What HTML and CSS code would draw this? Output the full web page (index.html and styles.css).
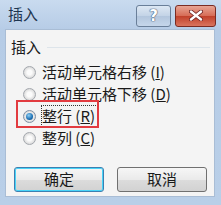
FILE: index.html
```html
<!DOCTYPE html>
<html lang="zh-CN">
<head>
  <meta charset="UTF-8">
  <meta name="viewport" content="width=device-width, initial-scale=1.0">
  <title>插入</title>
  <link rel="stylesheet" href="styles.css">
</head>
<body>
  <div class="dialog">
    <div class="titlebar">
      <span class="title">插入</span>
      <span class="tbtn help">?</span>
      <span class="tbtn close">
        <svg width="14" height="11" viewBox="0 0 14 11"><path d="M2 1.5 L12 9.5 M12 1.5 L2 9.5" stroke="#6b2020" stroke-width="4" stroke-linecap="round"/><path d="M2 1.5 L12 9.5 M12 1.5 L2 9.5" stroke="#fff" stroke-width="2.4" stroke-linecap="round"/></svg>
      </span>
    </div>
    <div class="client">
      <div class="group-label"><span>插入</span></div>
      <ul class="options">
        <li><span class="radio"></span><span class="txt">活动单元格右移 (<u>I</u>)</span></li>
        <li><span class="radio"></span><span class="txt">活动单元格下移 (<u>D</u>)</span></li>
        <li class="mark"><span class="radio on"></span><span class="txt focus">整行 (<u>R</u>)</span></li>
        <li><span class="radio"></span><span class="txt">整列 (<u>C</u>)</span></li>
      </ul>
      <div class="buttons">
        <span class="btn default">确定</span>
        <span class="btn">取消</span>
      </div>
    </div>
  </div>
</body>
</html>
```

FILE: styles.css
```css
* {margin:0; padding:0;}
body{
  font-family: "Noto Sans CJK SC", "DejaVu Sans", sans-serif;
  font-size: 15px;
  color: #1a1a1a;
}
.dialog{
  width: 221px;
  height: 205px;
  background: linear-gradient(#c9dbef, #b6cce6 30px, #b9cfe8);
  display: flex;
  flex-direction: column;
}
.titlebar{
  height: 29px;
  display: flex;
  align-items: center;
  padding-left: 8px;
}
.title{
  color: #1e3550;
  line-height: 20px;
  margin-top: -2px;
  flex: 1;
}
.tbtn{
  height: 20px;
  margin-top: 2px;
  border: 1px solid #6a7f99;
  border-radius: 3px;
  display: flex;
  align-items: center;
  justify-content: center;
}
.help{
  width: 33px;
  background: linear-gradient(#dde8f4, #c3d3e6 50%, #b3c6dd 51%, #c5d6ea);
  color: #fff;
  font-family: "DejaVu Sans", sans-serif;
  font-weight: bold;
  font-size: 15px;
  text-shadow: 0 0 1px #425a78, 0 0 1px #425a78, 0 0 1px #425a78;
  margin-right: 4px;
}
.close{
  width: 39px;
  background: linear-gradient(#e8a493, #d66b55 50%, #c1402a 51%, #d9745e);
  border-color: #7a2b22;
  margin-right: 5px;
}
.client{
  flex: 1;
  margin: 0 6px 8px 5px;
  background: #f4f4f4;
  border: 1px solid #a9bdd5;
  padding: 0 0 0 5px;
}
.group-label{
  display: flex;
  align-items: center;
  margin-top: 7px;
  line-height: 20px;
}
.group-label::after{
  content: "";
  flex: 1;
  height: 1px;
  background: #dde4ea;
  margin: 0 4px 0 6px;
}
.options{
  list-style: none;
  margin: 4px 0 0 12px;
}
.options li{
  height: 22px;
  display: flex;
  align-items: center;
  position: relative;
}
.radio{
  width: 11px;
  height: 11px;
  border: 1px solid #a3a7ad;
  border-radius: 50%;
  background: radial-gradient(#fbfbfb 30%, #dcdcdc 70%, #eeeeee);
  margin-right: 6px;
  position: relative;
}
.radio.on{
  border-color: #7f8fa3;
}
.radio.on::after{
  content: "";
  position: absolute;
  left: 2px; top: 2px;
  width: 7px; height: 7px;
  border-radius: 50%;
  background: radial-gradient(circle at 40% 35%, #8fd0f5, #1c6fb3 60%, #0d3f72);
}
.txt{
  line-height: 20px;
  white-space: nowrap;
}
.txt.focus{
  outline: 1px dotted #333;
  padding: 0 2px 0 0;
}
.mark::before{
  content: "";
  position: absolute;
  left: -7px; top: -5px;
  width: 79px; height: 24px;
  border: 2px solid #e23b40;
}
.buttons{
  display: flex;
  gap: 13px;
  margin-top: 18px;
  padding: 0 7px 0 3px;
}
.btn{
  flex: 1;
  height: 23px;
  border: 1px solid #707070;
  border-radius: 3px;
  background: linear-gradient(#f6f6f6, #eaeaea 50%, #dcdcdc 51%, #d2d2d2);
  text-align: center;
  line-height: 22px;
}
.btn.default{
  border-color: #3c7fb1;
  box-shadow: inset 0 0 0 1px #48d4f8;
}
```
